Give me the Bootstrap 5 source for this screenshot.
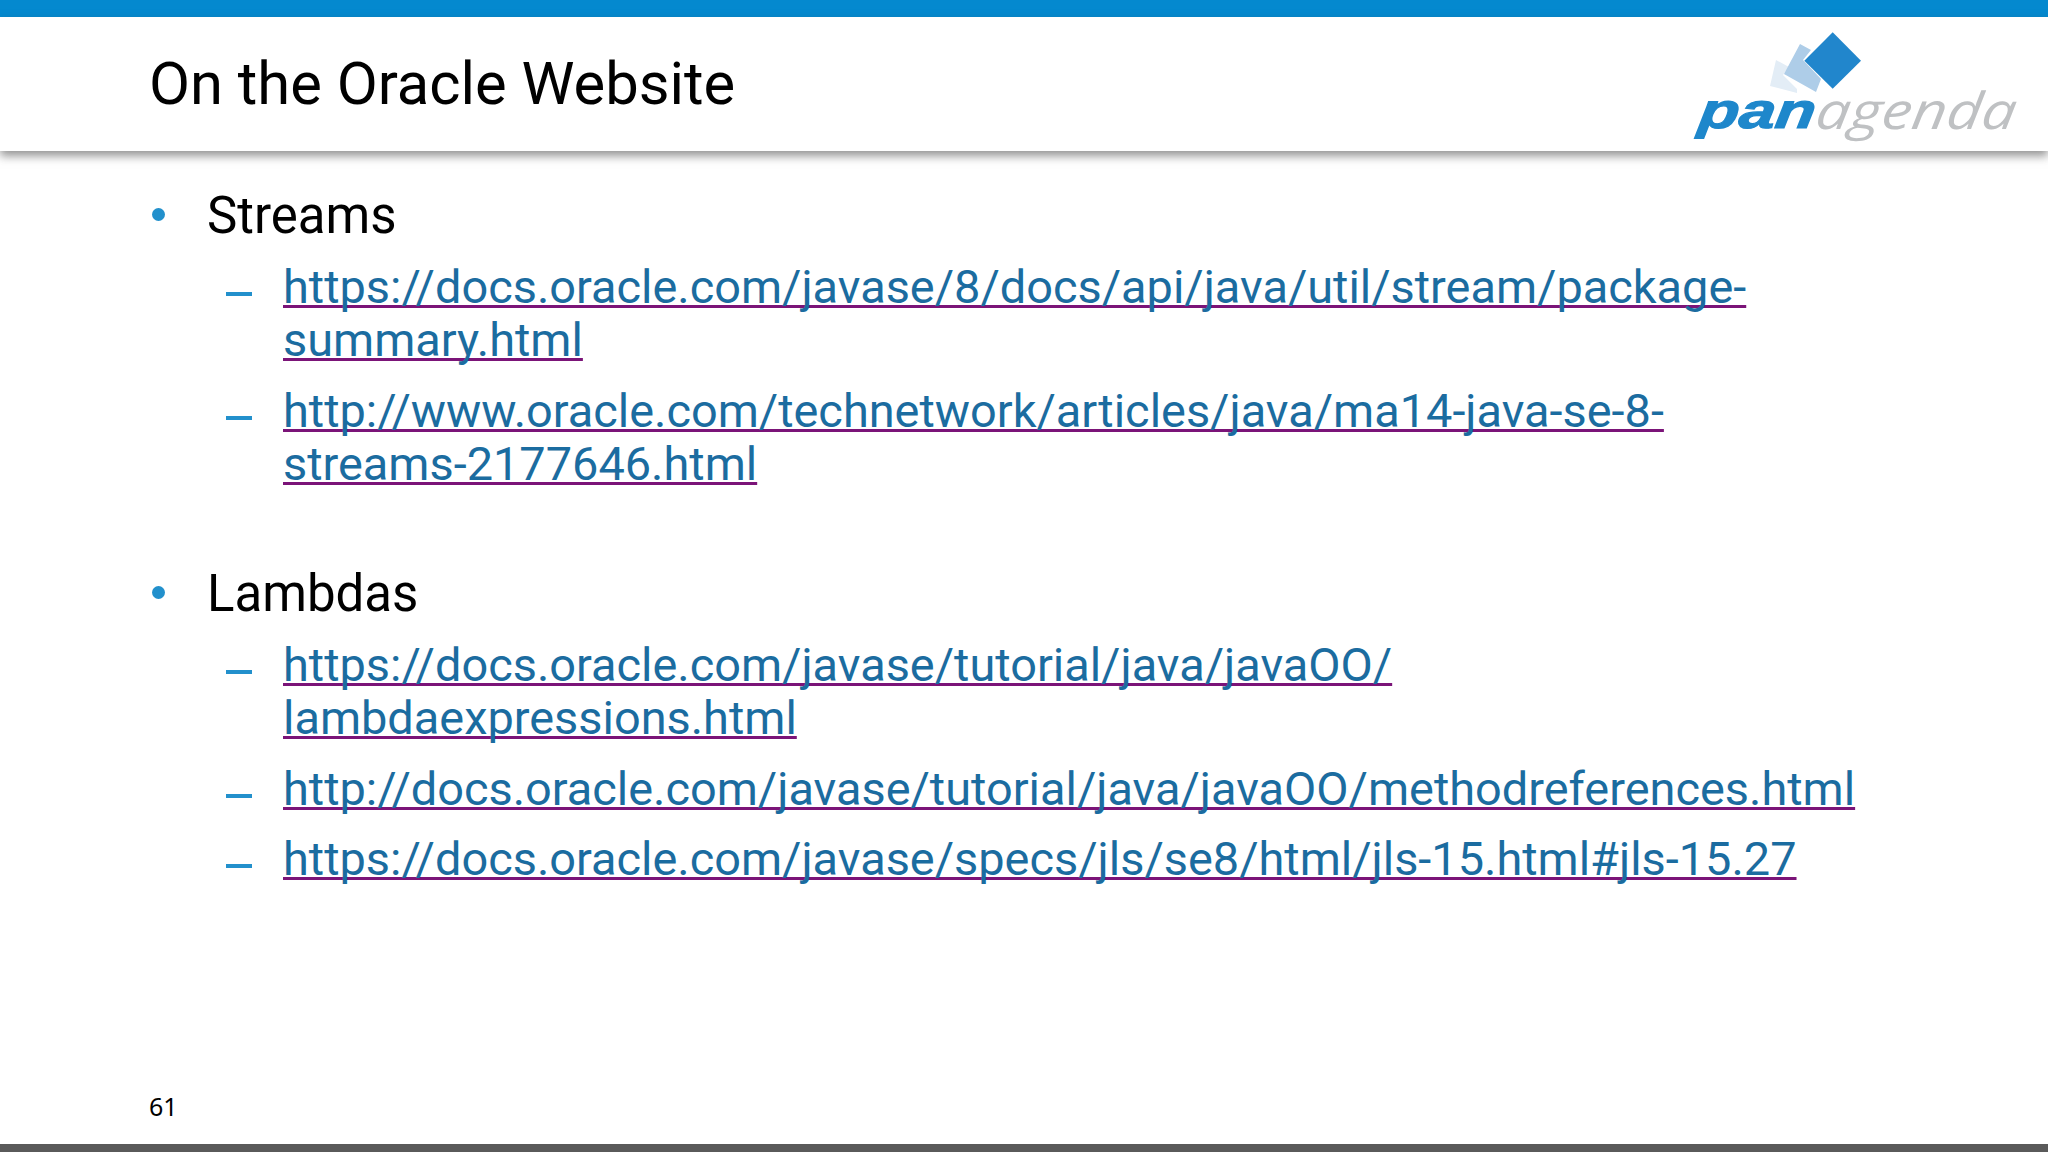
<!DOCTYPE html>
<html lang="en">
<head>
<meta charset="utf-8">
<title>On the Oracle Website</title>
<link href="https://cdn.jsdelivr.net/npm/bootstrap@5.3.0/dist/css/bootstrap.min.css" rel="stylesheet">
<style>
html,body{height:100%;margin:0;background:#fff;overflow:hidden}
body{font-family:Roboto,"Liberation Sans",sans-serif;color:#000}
.slide{height:1152px}
.topbar{height:17px;background:#0489cf}
.slidehead{height:134px;padding-left:150px;padding-right:18px;box-shadow:0 5px 9px rgba(60,60,60,.55);position:relative}
.slidehead h1{font-size:59.7px;font-weight:400;margin:0;line-height:134px;margin-left:-1px;font-family:Roboto,sans-serif}
.logo{width:350px;height:125px;display:block;margin-top:3px}
.logo text{font-style:italic;transform-box:fill-box;transform-origin:0 100%;transform:skewX(-8deg)}
.logo .pan{font-family:"Liberation Sans",sans-serif;font-weight:700;font-size:50px;fill:#1e87cb;stroke:#1e87cb;stroke-width:1.2px}
.logo .agenda{font-family:"Open Sans",sans-serif;font-weight:400;font-size:51px;fill:#bfc1c3}
.slidebody{padding:36.5px 0 0 150px}
.lvl1,.lvl2{list-style:none;margin:0;padding:0}
.lvl1>li{position:relative;padding-left:57px;font-size:51px;line-height:55px}
.lvl1>li+li{margin-top:75px}
.lvl1>li::before{content:"";position:absolute;left:2px;top:20px;width:13px;height:13px;border-radius:50%;background:#2290cc}
.lvl2>li{position:relative;padding-left:76px;padding-top:17px;font-size:46.9px;line-height:53.5px}
.lvl2>li::before{content:"";position:absolute;left:19px;width:26px;height:4px;background:#2290cc;margin-top:32px}
.lvl2 a{color:#1b6ca0;text-decoration:underline;text-decoration-color:#7b1478;text-decoration-thickness:2.5px;text-underline-offset:2px;text-decoration-skip-ink:none}
.pagenum{font-size:25px;line-height:28px;padding-left:149px;padding-bottom:24px;font-family:"Noto Sans",sans-serif}
.bottombar{height:8px;background:#5a5a5a}
</style>
</head>
<body>
<div class="slide d-flex flex-column">
  <div class="topbar"></div>
  <header class="slidehead d-flex justify-content-between align-items-start bg-white">
    <h1>On the Oracle Website</h1>
    <svg class="logo" viewBox="1680 20 350 125" role="img" aria-label="panagenda">
      <polygon points="1776,60 1789,67 1783,75 1797,89 1797,93 1770,86" fill="#e3edf6"/>
      <polygon points="1800,44 1811,50 1803,60 1821,79 1816,92 1784,74" fill="#aecde8"/>
      <polygon points="1832.7,32.3 1861,60.7 1832.7,88.7 1804.3,60.7" fill="#2186cc"/>
      <text class="pan" x="1696" y="128.5" textLength="116" lengthAdjust="spacingAndGlyphs">pan</text>
      <text class="agenda" x="1812" y="129.5" textLength="200" lengthAdjust="spacingAndGlyphs">agenda</text>
    </svg>
  </header>
  <main class="slidebody flex-grow-1">
    <ul class="lvl1">
      <li>Streams
        <ul class="lvl2">
          <li><a href="#">https://docs.oracle.com/javase/8/docs/api/java/util/stream/package-<br>summary.html</a></li>
          <li><a href="#">http://www.oracle.com/technetwork/articles/java/ma14-java-se-8-<br>streams-2177646.html</a></li>
        </ul>
      </li>
      <li>Lambdas
        <ul class="lvl2">
          <li><a href="#">https://docs.oracle.com/javase/tutorial/java/javaOO/<br>lambdaexpressions.html</a></li>
          <li><a href="#">http://docs.oracle.com/javase/tutorial/java/javaOO/methodreferences.html</a></li>
          <li><a href="#">https://docs.oracle.com/javase/specs/jls/se8/html/jls-15.html#jls-15.27</a></li>
        </ul>
      </li>
    </ul>
  </main>
  <div class="pagenum">61</div>
  <div class="bottombar"></div>
</div>
</body>
</html>
